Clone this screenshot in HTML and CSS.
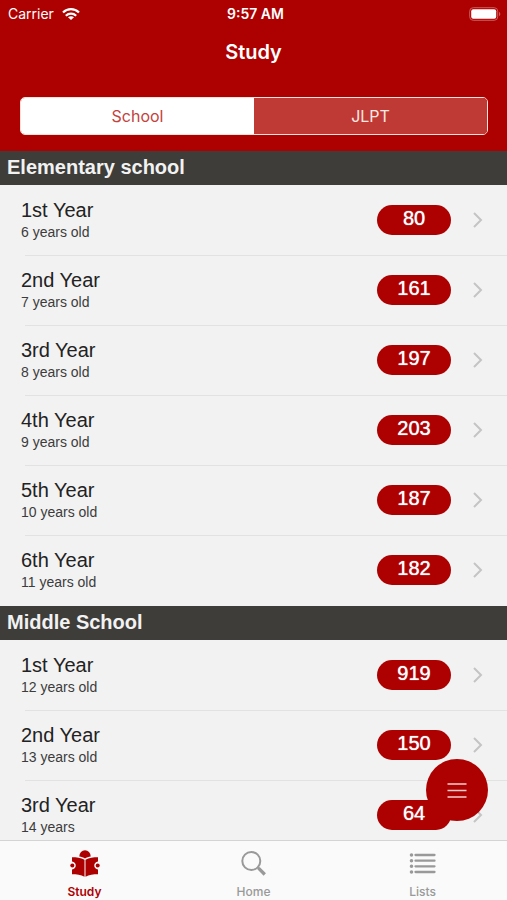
FILE: index.html
```html
<!DOCTYPE html>
<html lang="en">
<head>
<meta charset="utf-8">
<meta name="viewport" content="width=device-width, initial-scale=1">
<title>Study</title>
<link rel="stylesheet" href="styles.css">
</head>
<body>
<header class="top">
  <div class="status">
    <div class="carrier"><span>Carrier</span>
      <svg class="wifi" width="18" height="14" viewBox="0 0 18 14" aria-hidden="true"><g fill="none" stroke="#fff" stroke-width="2.200"><path d="M1 5.500C5.500 1 12.500 1 17 5.500"/><path d="M3.800 8.700c3-2.800 7.400-2.800 10.400 0"/></g><path d="M9 13 6 10.200c1.700-1.400 4.300-1.400 6 0z" fill="#fff"/></svg>
    </div>
    <time class="clock">9:57 AM</time>
    <svg class="battery" width="32" height="14" viewBox="0 0 32 14" aria-hidden="true"><rect x=".7" y=".7" width="28" height="12.600" rx="3.500" fill="none" stroke="#d05a5a" stroke-width="1"/><rect x="2.200" y="2.200" width="25" height="9.600" rx="2" fill="#fff"/><path d="M30 4.800c1.800.8 1.800 3.600 0 4.400z" fill="#d05a5a"/></svg>
  </div>
  <h1 class="title">Study</h1>
  <div class="segments">
    <button class="segment selected" type="button">School</button>
    <button class="segment" type="button">JLPT</button>
  </div>
</header>
<main class="content">
  <section>
    <h2 class="section-title">Elementary school</h2>
    <ul class="rows">
      <li><a class="row" href="#"><span class="label"><span class="name">1st Year</span><span class="age">6 years old</span></span><span class="count">80</span><svg class="chevron" viewBox="0 0 10 16"><path d="m1 1 7 7-7 7"/></svg></a></li>
      <li><a class="row" href="#"><span class="label"><span class="name">2nd Year</span><span class="age">7 years old</span></span><span class="count">161</span><svg class="chevron" viewBox="0 0 10 16"><path d="m1 1 7 7-7 7"/></svg></a></li>
      <li><a class="row" href="#"><span class="label"><span class="name">3rd Year</span><span class="age">8 years old</span></span><span class="count">197</span><svg class="chevron" viewBox="0 0 10 16"><path d="m1 1 7 7-7 7"/></svg></a></li>
      <li><a class="row" href="#"><span class="label"><span class="name">4th Year</span><span class="age">9 years old</span></span><span class="count">203</span><svg class="chevron" viewBox="0 0 10 16"><path d="m1 1 7 7-7 7"/></svg></a></li>
      <li><a class="row" href="#"><span class="label"><span class="name">5th Year</span><span class="age">10 years old</span></span><span class="count">187</span><svg class="chevron" viewBox="0 0 10 16"><path d="m1 1 7 7-7 7"/></svg></a></li>
      <li><a class="row" href="#"><span class="label"><span class="name">6th Year</span><span class="age">11 years old</span></span><span class="count">182</span><svg class="chevron" viewBox="0 0 10 16"><path d="m1 1 7 7-7 7"/></svg></a></li>
    </ul>
  </section>
  <section>
    <h2 class="section-title">Middle School</h2>
    <ul class="rows">
      <li><a class="row" href="#"><span class="label"><span class="name">1st Year</span><span class="age">12 years old</span></span><span class="count">919</span><svg class="chevron" viewBox="0 0 10 16"><path d="m1 1 7 7-7 7"/></svg></a></li>
      <li><a class="row" href="#"><span class="label"><span class="name">2nd Year</span><span class="age">13 years old</span></span><span class="count">150</span><svg class="chevron" viewBox="0 0 10 16"><path d="m1 1 7 7-7 7"/></svg></a></li>
      <li><a class="row" href="#"><span class="label"><span class="name">3rd Year</span><span class="age">14 years</span></span><span class="count">64</span><svg class="chevron" viewBox="0 0 10 16"><path d="m1 1 7 7-7 7"/></svg></a></li>
    </ul>
  </section>
</main>
<button class="fab" type="button" aria-label="Menu"><svg width="20" height="16" viewBox="0 0 20 16"><path d="M.5 2h19M.5 8.500h19M.5 15h19" stroke="#f3cfcf" stroke-width="1.300"/></svg></button>
<nav class="tabs">
  <a class="tab active" href="#">
    <svg width="30" height="28" viewBox="0 0 30 28" aria-hidden="true" fill="currentColor"><path d="M9.300 7.500a5.700 6.300 0 0 1 11.400 0c-2 .3-4.200.9-5.700 1.900-1.500-1-3.700-1.600-5.700-1.900z"/><path d="M2 8.200c4.500 0 8.800.5 12.500 2.600V27.800c-3.600-1.900-7.900-2.500-12.500-2.500v-4.800c5-.5 5-7.500 0-8z"/><path d="M28 8.200c-4.500 0-8.800.5-12.500 2.600V27.800c3.600-1.900 7.900-2.500 12.500-2.500v-4.800c-5-.5-5-7.500 0-8z"/><circle cx="2.300" cy="16.500" r="2"/><circle cx="27.700" cy="16.500" r="2"/></svg>
    <span>Study</span></a>
  <a class="tab" href="#">
    <svg width="30" height="28" viewBox="0 0 30 28" aria-hidden="true" fill="none" stroke="currentColor"><circle cx="12.300" cy="12" r="9" stroke-width="2"/><path d="m18.800 18.500 1.800 1.800" stroke-width="2"/><path d="m19.500 19.200 6.300 6.300" stroke-width="3.300"/></svg>
    <span>Home</span></a>
  <a class="tab" href="#">
    <svg width="30" height="28" viewBox="0 0 30 28" aria-hidden="true" fill="none" stroke="currentColor"><path d="M7.500 6h19M7.500 11.700h19M7.500 17.300h19M7.500 23h19" stroke-width="2.300" stroke-linecap="round"/><path d="M3.500 6h.01M3.500 11.700h.01M3.500 17.300h.01M3.500 23h.01" stroke-width="3.600" stroke-linecap="round"/></svg>
    <span>Lists</span></a>
</nav>
</body>
</html>
```
FILE: styles.css
```css
* { box-sizing: border-box; }

body {
  margin: 0;
  height: 100vh;
  display: flex;
  flex-direction: column;
  position: relative;
  overflow: hidden;
  background: #f2f2f2;
  font-family: "Liberation Sans", Arial, sans-serif;
}

a { color: inherit; text-decoration: none; }

button { font: inherit; border: 0; padding: 0; }

.top {
  flex: none;
  background: #ad0000;
  color: #fff;
  font-family: Inter, sans-serif;
  padding-bottom: 16px;
}

.status {
  display: grid;
  grid-template-columns: 1fr auto 1fr;
  align-items: center;
  height: 27px;
  padding: 0 6px 0 8px;
  font-size: 14px;
}

.carrier { display: flex; align-items: center; gap: 8px; }

.clock { padding-left: 2px; font-weight: 600; }

.battery { justify-self: end; }

.title {
  margin: 0;
  height: 50px;
  line-height: 50px;
  text-align: center;
  font-size: 20px;
  font-weight: 600;
}

.segments {
  display: flex;
  height: 38px;
  margin: 20px 19px 0 20px;
  border: 1px solid #ffe0d8;
  border-radius: 5px;
  overflow: hidden;
}

.segment {
  flex: 1;
  background: #bf3a34;
  color: #ffe9e4;
  font-size: 16px;
}

.segment.selected { background: #fff; color: #c4423c; }

.content { flex: 1; min-height: 0; overflow: hidden; }

.section-title {
  margin: 0;
  height: 34px;
  padding-left: 7px;
  background: #3e3d39;
  color: #f2f2f2;
  font-size: 20px;
  line-height: 33px;
  font-weight: 700;
}

.rows { margin: 0; padding: 0 0 1px; list-style: none; }

.rows li + li::before {
  content: "";
  display: block;
  height: 1px;
  margin: 0 0 -1px 25px;
  background: #e2e2e2;
}

.row {
  display: flex;
  align-items: center;
  height: 70px;
  padding: 0 24px 0 21px;
  color: #222;
}

.label { flex: 1; display: flex; flex-direction: column; }

.name { font-size: 20px; line-height: 24px; }

.age { font-size: 14px; line-height: 20px; color: #3c3c3c; }

.count {
  width: 74px;
  height: 30px;
  border-radius: 15px;
  background: #ad0000;
  color: #fff;
  text-align: center;
  font-size: 20px;
  line-height: 26px;
  text-shadow: 0 0 1px #fff;
}

.chevron {
  width: 10px;
  height: 16px;
  margin-left: 22px;
  fill: none;
  stroke: #c4c4c4;
  stroke-width: 2;
}

.fab {
  position: absolute;
  right: 19px;
  bottom: 79px;
  width: 62px;
  height: 62px;
  border-radius: 50%;
  background: #ad0000;
  display: grid;
  place-items: center;
}

.tabs {
  flex: none;
  display: flex;
  height: 60px;
  border-top: 1px solid #d4d4d4;
  background: #fafafa;
  font-family: Inter, sans-serif;
}

.tab {
  flex: 1;
  display: flex;
  flex-direction: column;
  align-items: center;
  gap: 7px;
  padding-top: 8px;
  color: #999;
  font-size: 12px;
  line-height: 16px;
  font-weight: 500;
}

.tab.active { color: #ad0000; font-weight: 600; }
```
